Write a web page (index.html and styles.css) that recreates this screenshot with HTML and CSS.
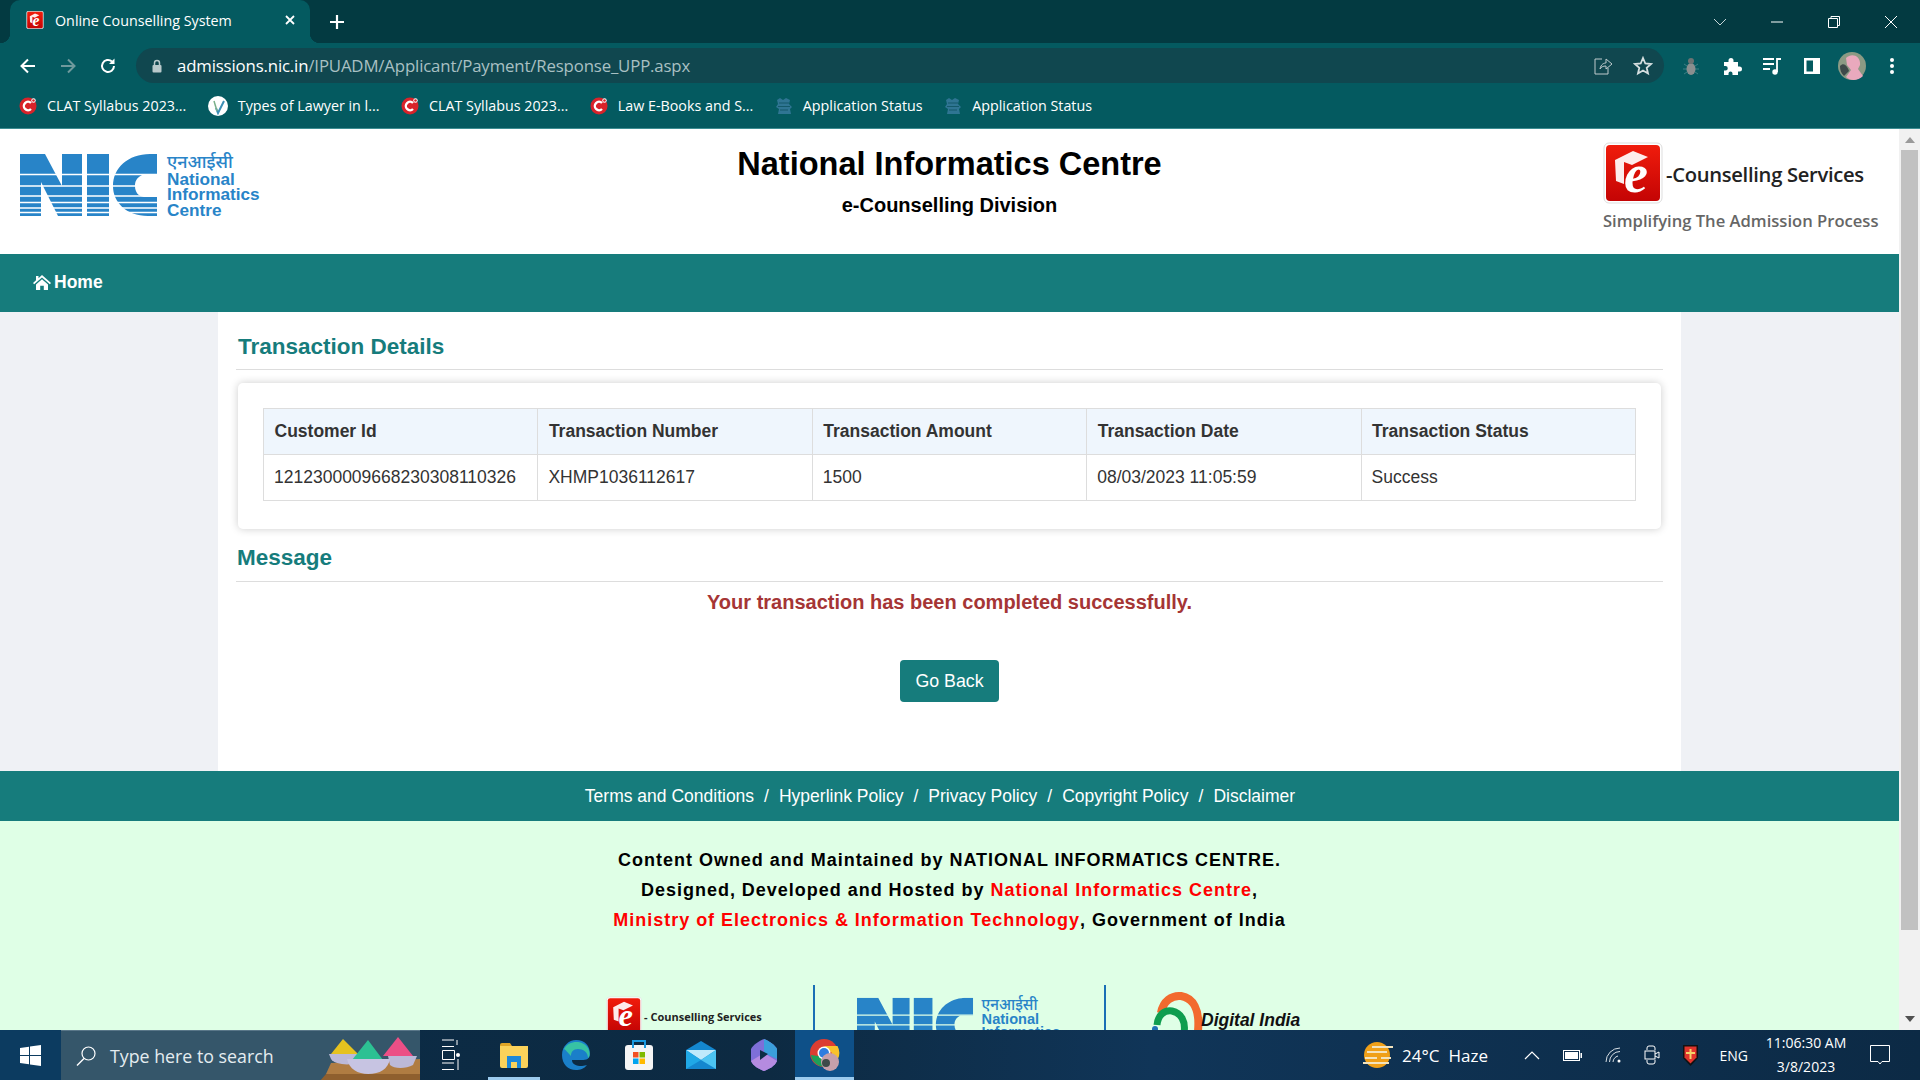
FILE: index.html
```html
<!DOCTYPE html>
<html lang="en">
<head>
<meta charset="utf-8">
<title>Online Counselling System</title>
<link rel="stylesheet" href="styles.css">
</head>
<body>
<svg class="defs" width="0" height="0">
  <defs>
    <linearGradient id="redg" x1="0" y1="0" x2="0" y2="1"><stop offset="0" stop-color="#f01c0c"/><stop offset="1" stop-color="#c40404"/></linearGradient>
    <symbol id="ec" viewBox="0 0 60 62">
      <rect x="1" y="1" width="58" height="60" rx="5" fill="#fff" stroke="#ddd"/>
      <rect x="3" y="3" width="54" height="56" rx="4" fill="url(#redg)"/>
      <path d="M12 18 L30 9 L45 15 L29 23 L21 20 V42 L13 39Z" fill="#fff" opacity=".92"/>
      <text x="33" y="50" class="ec-e">e</text>
    </symbol>
    <symbol id="clat" viewBox="0 0 18 18">
      <circle cx="9" cy="9" r="8.5" fill="#d8232a"/>
      <path d="M12 6 A4.2 4.2 0 1 0 12 12" fill="none" stroke="#fff" stroke-width="2.4"/>
      <circle cx="14.5" cy="3.5" r="2.2" fill="#fff"/><circle cx="14.5" cy="3.5" r="1.3" fill="#d8232a"/>
    </symbol>
    <symbol id="law" viewBox="0 0 20 20">
      <circle cx="10" cy="10" r="10" fill="#fff"/>
      <path d="M8 12 L10 17 L16 5" fill="none" stroke="#3d8fb5" stroke-width="2"/>
      <path d="M6 5 L9 15" stroke="#7ab08a" stroke-width="1.5"/>
    </symbol>
    <symbol id="emblem" viewBox="0 0 18 18">
      <path d="M2 3L5 1L8 3L11 1L15 3L14 7L17 10L15 12L16 17H3L4 12L1 10L3 7Z" fill="#2f7593"/>
      <path d="M4 6H14M3 9.500H15M5 13H13" stroke="#14596a" stroke-width="1"/>
    </symbol>
    <symbol id="nicmark" viewBox="0 0 137 62">
      <path d="M0 0H25L42 32V0H62V62H38L21 28V62H0Z" fill="#2884c8"/>
      <path d="M67 0H89V62H67Z" fill="#2884c8"/>
      <path d="M137 0V21H122C116 24 115 28 115 32C115 38 118 42 124 43H137V62H128C106 62 93 48 93 32C93 14 108 0 130 0Z" fill="#2884c8"/>
      <path d="M0 20.500H137M0 32H137M0 42H137M0 48.500H137M0 54H137M0 58.500H137" stroke="currentColor" stroke-width="1.5" fill="none"/>
    </symbol>
  </defs>
</svg>
<div class="screen">
  <div class="tabstrip">
    <div class="tab">
      <svg class="tab-fav" width="18" height="18"><use href="#ec"/></svg>
      <span class="tab-title">Online Counselling System</span>
      <svg class="tab-x" width="12" height="12" viewBox="0 0 12 12"><path d="M2 2L10 10M10 2L2 10" stroke="#fff" stroke-width="1.8"/></svg>
    </div>
    <svg class="tab-plus" width="16" height="16" viewBox="0 0 16 16"><path d="M8 1V15M1 8H15" stroke="#fff" stroke-width="2.2"/></svg>
    <div class="spacer"></div>
    <div class="winctl">
      <svg width="14" height="8" viewBox="0 0 14 8"><path d="M1 1L7 7L13 1" fill="none" stroke="#c6d6d8"/></svg>
      <svg width="14" height="2" viewBox="0 0 14 2"><path d="M1 1H13" stroke="#fff"/></svg>
      <svg width="14" height="14" viewBox="0 0 14 14"><path d="M1.500 3.500H10.500V12.500H1.500ZM4 3.500V1.500H12.500V10.500H10.500" fill="none" stroke="#fff"/></svg>
      <svg width="14" height="14" viewBox="0 0 14 14"><path d="M1 1L13 13M13 1L1 13" stroke="#fff"/></svg>
    </div>
  </div>
  <div class="toolbar">
    <svg class="nav-ic" width="18" height="18" viewBox="0 0 18 18"><path d="M16 9H3M9 2.500L2.500 9L9 15.500" fill="none" stroke="#fff" stroke-width="2"/></svg>
    <svg class="nav-ic" width="18" height="18" viewBox="0 0 18 18"><path d="M2 9H15M9 2.500L15.500 9L9 15.500" fill="none" stroke="#6f9a9d" stroke-width="2"/></svg>
    <svg class="nav-ic" width="18" height="18" viewBox="0 0 18 18"><path d="M15 9A6 6 0 1 1 13 4.500" fill="none" stroke="#fff" stroke-width="2"/><path d="M15.500 1.500V7H10Z" fill="#fff"/></svg>
    <div class="omnibox">
      <svg class="lock" width="12" height="14" viewBox="0 0 12 14"><path d="M3.500 6V4a2.500 2.500 0 0 1 5 0V6" fill="none" stroke="#b9c9cb" stroke-width="1.500"/><rect x="1.500" y="6" width="9" height="7.500" rx="1" fill="#b9c9cb"/></svg>
      <span class="url"><span class="url-host">admissions.nic.in</span>/IPUADM/Applicant/Payment/Response_UPP.aspx</span>
      <div class="spacer"></div>
      <svg class="omni-ic" width="20" height="20" viewBox="0 0 20 20"><path d="M9 3H2V18H15V12M7 13C8 8 11 7 13 7V3L19 8L13 13V10C10 10 8 11 7 13Z" fill="none" stroke="#bfcbcd" stroke-width="1"/></svg>
      <svg class="omni-ic star" width="20" height="20" viewBox="0 0 20 20"><path d="M10 2L12.300 7.500L18 8L13.700 11.800L15 17.500L10 14.500L5 17.500L6.300 11.800L2 8L7.700 7.500Z" fill="none" stroke="#d6dfe0" stroke-width="1.800"/></svg>
    </div>
    <div class="ext">
      <svg width="20" height="20" viewBox="0 0 20 20"><path d="M3 8L6 10M17 8L14 10M2 13H6M18 13H14M3 18L6 16M17 18L14 16" stroke="#3c7f84"/><ellipse cx="10" cy="13" rx="4.500" ry="6" fill="#8a8f8f"/><rect x="7" y="2" width="6" height="6" rx="3" fill="#6c7373"/></svg>
      <svg width="21" height="20" viewBox="0 0 21 20"><path d="M3 6H7.500V4.500a2.500 2.500 0 0 1 5 0V6H17V10.500H18.500a2.500 2.500 0 0 1 0 5H17V19H11.500V17.500a2 2 0 0 0-4 0V19H3V14.500H4.500a2.200 2.200 0 0 0 0-4.500H3Z" fill="#fff"/></svg>
      <svg width="20" height="20" viewBox="0 0 20 20"><path d="M1 3H12M1 8H12M1 13H8" stroke="#fff" stroke-width="1.800"/><path d="M15 16V3H19" fill="none" stroke="#fff" stroke-width="1.800"/><circle cx="13" cy="16" r="2.700" fill="#fff"/></svg>
      <svg width="20" height="20" viewBox="0 0 20 20"><path d="M2 2H18V18H2ZM4.500 4.500V15.500H11V4.500Z" fill="#fff" fill-rule="evenodd"/></svg>
      <svg class="avatar" width="28" height="28" viewBox="0 0 28 28"><circle cx="14" cy="14" r="14" fill="#8b9a84"/><path d="M8 6C14 0 23 4 22 13L20 17L25 24C20 29 12 29 8 25L13 18L9 13Z" fill="#e9a9bd"/><path d="M2 14C6 10 9 14 11 19L6 24C3 21 2 18 2 14Z" fill="#3e4a4a"/></svg>
      <svg width="20" height="20" viewBox="0 0 20 20"><circle cx="10" cy="4" r="2" fill="#fff"/><circle cx="10" cy="10" r="2" fill="#fff"/><circle cx="10" cy="16" r="2" fill="#fff"/></svg>
    </div>
  </div>
  <div class="bookmarks">
    <div class="bm"><svg width="18" height="18"><use href="#clat"/></svg><span>CLAT Syllabus 2023...</span></div>
    <div class="bm"><svg width="20" height="20"><use href="#law"/></svg><span>Types of Lawyer in l...</span></div>
    <div class="bm"><svg width="18" height="18"><use href="#clat"/></svg><span>CLAT Syllabus 2023...</span></div>
    <div class="bm"><svg width="18" height="18"><use href="#clat"/></svg><span>Law E-Books and S...</span></div>
    <div class="bm"><svg width="18" height="18"><use href="#emblem"/></svg><span>Application Status</span></div>
    <div class="bm"><svg width="18" height="18"><use href="#emblem"/></svg><span>Application Status</span></div>
  </div>

  <div class="viewport">
    <div class="page">
      <header class="site-head">
        <div class="head-left">
          <svg class="nic-logo" width="243" height="70" viewBox="0 0 243 70">
            <use href="#nicmark" x="0" y="4" width="137" height="62"/>
            <text x="147" y="18" class="nic-hi">एनआईसी</text>
            <text x="147" y="35" class="nic-en">National</text>
            <text x="147" y="50" class="nic-en">Informatics</text>
            <text x="147" y="66" class="nic-en">Centre</text>
          </svg>
        </div>
        <div class="head-mid">
          <h1>National Informatics Centre</h1>
          <p>e-Counselling Division</p>
        </div>
        <div class="head-right">
          <div class="ec-row">
            <svg width="60" height="62"><use href="#ec"/></svg>
            <span class="ec-name">-Counselling Services</span>
          </div>
          <div class="ec-tag">Simplifying The Admission Process</div>
        </div>
      </header>
      <nav class="site-nav">
        <svg width="18" height="15" viewBox="0 0 18 15"><path d="M9 0L18 8L16.800 9.200L9 2.400L1.200 9.200L0 8L3 5.300V1H5.500V3.200Z" fill="#fff"/><path d="M3 9.500L9 4.200L15 9.500V15H10.800V10.800H7.200V15H3Z" fill="#fff"/></svg>
        <span>Home</span>
      </nav>
      <main class="main">
        <section class="panel">
          <h2 class="sec-title">Transaction Details</h2>
          <div class="card">
            <table class="tx">
              <tr><th>Customer Id</th><th>Transaction Number</th><th>Transaction Amount</th><th>Transaction Date</th><th>Transaction Status</th></tr>
              <tr><td>1212300009668230308110326</td><td>XHMP1036112617</td><td>1500</td><td>08/03/2023 11:05:59</td><td>Success</td></tr>
            </table>
          </div>
          <h2 class="sec-title msg-title">Message</h2>
          <p class="success">Your transaction has been completed successfully.</p>
          <div class="btn-row"><a class="btn">Go Back</a></div>
        </section>
      </main>
      <div class="foot-links">
        <a>Terms and Conditions</a><i>/</i><a>Hyperlink Policy</a><i>/</i><a>Privacy Policy</a><i>/</i><a>Copyright Policy</a><i>/</i><a>Disclaimer</a>
      </div>
      <footer class="foot">
        <p>Content Owned and Maintained by NATIONAL INFORMATICS CENTRE.</p>
        <p>Designed, Developed and Hosted by <b>National Informatics Centre</b>,</p>
        <p><b>Ministry of Electronics &amp; Information Technology</b>, Government of India</p>
        <div class="foot-logos">
          <div class="fl fl-ec">
            <svg width="36" height="40"><use href="#ec"/></svg>
            <span>- Counselling Services</span>
          </div>
          <div class="fl fl-nic">
            <svg width="206" height="60" viewBox="0 0 243 70">
              <use href="#nicmark" x="0" y="4" width="137" height="62"/>
              <text x="147" y="18" class="nic-hi">एनआईसी</text>
              <text x="147" y="35" class="nic-en">National</text>
              <text x="147" y="50" class="nic-en">Informatics</text>
              <text x="147" y="66" class="nic-en">Centre</text>
            </svg>
          </div>
          <div class="fl fl-di">
            <svg width="152" height="50" viewBox="0 0 152 50">
              <path d="M12 22C14 10 23 4 32 5C44 7 51 18 49 40" fill="none" stroke="#f26a2e" stroke-width="8"/>
              <path d="M8 34C9 24 15 19 23 20C32 22 37 30 35 42" fill="none" stroke="#0f9d4f" stroke-width="7"/>
              <circle cx="6" cy="38" r="3" fill="#1f6fb5"/>
              <text x="52" y="35" class="di-text">Digital India</text>
            </svg>
          </div>
        </div>
      </footer>
    </div>
    <div class="scrollbar">
      <svg width="10" height="6" viewBox="0 0 10 6"><path d="M5 0L10 6H0Z" fill="#9a9a9a"/></svg>
      <div class="thumb"></div>
      <svg width="10" height="6" viewBox="0 0 10 6"><path d="M5 6L10 0H0Z" fill="#505050"/></svg>
    </div>
  </div>

  <div class="taskbar">
    <div class="start"><svg width="21" height="21" viewBox="0 0 21 21"><path d="M0 3L9 1.700V10H0ZM10 1.500L21 0V10H10ZM0 11H9V19.300L0 18ZM10 11H21V21L10 19.500Z" fill="#fff"/></svg></div>
    <div class="search">
      <svg width="22" height="22" viewBox="0 0 22 22"><circle cx="13.500" cy="8.500" r="6.500" fill="none" stroke="#fff" stroke-width="1.200"/><path d="M9 13.500L2 20.500" stroke="#fff" stroke-width="1.400"/></svg>
      <span>Type here to search</span>
      <div class="spacer"></div>
      <svg class="holi" width="100" height="50" viewBox="0 0 100 50">
        <path d="M11 32L100 28V43H6Z" fill="#b07c42"/>
        <path d="M6 43H100V50H0Z" fill="#8f5f2e"/>
        <path d="M11 23L23 8L38 23Z" fill="#e6c21f"/>
        <path d="M63 25L78 6L93 25Z" fill="#ec4f86"/>
        <path d="M9 23H40L36 32C28 35 14 33 11 28Z" fill="#bcb9d8"/>
        <path d="M68 25H97L93 34C86 38 74 38 70 34Z" fill="#bcb9d8"/>
        <path d="M32 29L48 9L63 29Z" fill="#2cc193"/>
        <path d="M27 28H70C68 38 60 43 48 43C38 43 29 38 27 28Z" fill="#c7c4e2"/>
      </svg>
    </div>
    <div class="tb-apps">
      <div class="app"><svg width="20" height="32" viewBox="0 0 20 32"><path d="M1 1H13M1 7.500H13M1 24H13M1 30.500H13M16 1V6" stroke="#fff" fill="none"/><path d="M1.500 11.500H13.500V20.500H1.500Z" fill="none" stroke="#fff"/><circle cx="17" cy="16" r="2" fill="#fff"/><path d="M17 20V31" stroke="#fff"/></svg></div>
      <div class="app running"><svg width="28" height="26" viewBox="0 0 28 26"><path d="M0 3A2 2 0 0 1 2 1H10L12 4H0Z" fill="#e0a526"/><path d="M0 4H28V24A2 2 0 0 1 26 26H2A2 2 0 0 1 0 24Z" fill="#fbd25a"/><path d="M7 14H21V26H17V20H11V26H7Z" fill="#1e88d8"/></svg></div>
      <div class="app"><svg width="30" height="30" viewBox="0 0 30 30"><path d="M1 15C1 6 8 0 15 0C24 0 29 6 29 14C29 19 25 20 21 20H11C11 24 15 26 21 26C23 26 25 25 26 25C23 29 19 30 15 30C7 30 1 24 1 15Z" fill="#1a7fc9"/><path d="M3 9C7 1 21 -1 27 8C29 12 29 16 27 18C27 12 22 9 17 9C12 9 10 12 10 16C6 12 5 10 3 9Z" fill="#37c2a4"/></svg></div>
      <div class="app"><svg width="28" height="30" viewBox="0 0 28 30"><rect y="5" width="28" height="25" rx="3" fill="#f5f5f5"/><path d="M8 8V1H20V8" fill="none" stroke="#1b9ae0" stroke-width="2"/><rect x="8" y="12" width="5.500" height="5.500" fill="#f25022"/><rect x="14.500" y="12" width="5.500" height="5.500" fill="#7fba00"/><rect x="8" y="18.500" width="5.500" height="5.500" fill="#00a4ef"/><rect x="14.500" y="18.500" width="5.500" height="5.500" fill="#ffb900"/></svg></div>
      <div class="app"><svg width="30" height="28" viewBox="0 0 30 28"><path d="M0 9L15 0L30 9V28H0Z" fill="#1487cf"/><path d="M0 9H30L15 19Z" fill="#bfe9fb"/><path d="M0 28V9L15 19Z" fill="#20a8e6"/><path d="M30 28V9L15 19Z" fill="#4cc4f2"/></svg></div>
      <div class="app"><svg width="26" height="32" viewBox="0 0 26 32"><path d="M13 0C18 2 24 6 26 10V22C24 27 18 30 13 32C8 30 2 27 0 22V10C2 6 8 2 13 0Z" fill="#7e6fd8"/><path d="M13 0C18 2 24 6 26 10V20L13 14Z" fill="#3b9fdc"/><path d="M0 22L13 14L26 22C24 27 18 30 13 32C8 30 2 27 0 22Z" fill="#b58be0"/><path d="M9 11L17 15L9 21Z" fill="#0d2d45"/></svg></div>
      <div class="app active"><svg width="30" height="32" viewBox="0 0 30 32"><circle cx="14" cy="14" r="14" fill="#dc3d32"/><path d="M1 16A14 14 0 0 0 16 28L22 17H8Z" fill="#1da05a"/><path d="M14 7H27.500A14 14 0 0 1 16 28L22 14Z" fill="#f9c22c"/><circle cx="14" cy="14" r="6.500" fill="#fff"/><circle cx="14" cy="14" r="5" fill="#2f7de0"/><circle cx="20" cy="23" r="9" fill="#c7a0ab"/><circle cx="16" cy="24" r="4" fill="#3e4a4a"/></svg></div>
    </div>
    <div class="spacer"></div>
    <div class="weather">
      <svg width="30" height="30" viewBox="0 0 30 30"><circle cx="14" cy="15" r="13" fill="#f0a018"/><path d="M9 7H30M4 12H24M2 18H14M18 18H28M0 23H26" stroke="#f3e3bd" stroke-width="2"/></svg>
      <span class="temp">24°C</span><span>Haze</span>
    </div>
    <div class="tray">
      <svg width="16" height="9" viewBox="0 0 16 9"><path d="M1 8L8 1L15 8" fill="none" stroke="#fff" stroke-width="1.200"/></svg>
      <svg width="19" height="11" viewBox="0 0 19 11"><rect x=".5" y=".5" width="16" height="10" fill="none" stroke="#fff"/><rect x="2" y="2" width="13" height="7" fill="#fff"/><rect x="17.500" y="3" width="1.500" height="5" fill="#fff"/></svg>
      <svg width="16" height="16" viewBox="0 0 16 16"><path d="M1 15A14 14 0 0 1 15 1M4.500 15A10.500 10.500 0 0 1 15 4.500M8 15A7 7 0 0 1 13 9" fill="none" stroke="#d8e0e6"/><circle cx="14" cy="14" r="1.500" fill="#fff"/></svg>
      <svg width="16" height="20" viewBox="0 0 16 20"><path d="M3 5V3A2 2 0 0 1 5 1H9A2 2 0 0 1 11 3V5M3 15V17A2 2 0 0 0 5 19H9A2 2 0 0 0 11 17V15" fill="none" stroke="#fff"/><rect x="1" y="6" width="10" height="8" fill="none" stroke="#fff"/><path d="M11 9L15 7V13L11 11" fill="none" stroke="#fff"/></svg>
      <svg width="15" height="21" viewBox="0 0 15 21"><path d="M0 0H15V13L7.500 21L0 13Z" fill="#111"/><path d="M1.500 1.500H13.500V12.500L7.500 18.500L1.500 12.500Z" fill="#e0342c"/><path d="M7.500 4V14M3 8H12" stroke="#f3d26a" stroke-width="2"/></svg>
    </div>
    <span class="lang">ENG</span>
    <div class="clock"><span>11:06:30 AM</span><span>3/8/2023</span></div>
    <div class="notif"><svg width="20" height="20" viewBox="0 0 20 20"><path d="M.5.5H19.500V16.500H12L10 19L8 16.500H.5Z" fill="none" stroke="#fff"/></svg></div>
  </div>
</div>
</body>
</html>
```

FILE: styles.css
```css
* { box-sizing: border-box; }
html, body { margin: 0; height: 100%; overflow: hidden; }
body { font-family: "Liberation Sans", Arial, sans-serif; }
.defs { position: absolute; }
.spacer { flex: 1; }
svg { display: block; flex: none; }
.screen { display: flex; flex-direction: column; height: 1080px; overflow: hidden; }

/* browser chrome */
.tabstrip { height: 43px; background: #033a41; display: flex; align-items: flex-end; flex: none; }
.tab { position: relative; width: 300px; height: 43px; margin-left: 10px; background: #045a60; border-radius: 10px 10px 0 0; display: flex; align-items: center; padding-left: 16px; color: #fff; font: 14.300px "Open Sans", sans-serif; }
.tab::before, .tab::after { content: ""; position: absolute; bottom: 0; width: 10px; height: 10px; }
.tab::before { left: -10px; background: radial-gradient(circle at 0 0, transparent 10px, #045a60 10.500px); }
.tab::after { right: -10px; background: radial-gradient(circle at 100% 0, transparent 10px, #045a60 10.500px); }
.tab-fav { margin-top: -3px; }
.tab-title { margin-left: 11px; width: 233px; margin-top: -3px; white-space: nowrap; }
.tab-x { margin-left: -4px; margin-top: -3px; }
.tab-plus { margin: 0 0 13px 19px; }
.winctl { display: flex; align-items: center; height: 43px; margin-top: -6px; padding-right: 22px; gap: 43px; }
.toolbar { height: 42px; padding-top: 3px; background: #045a60; display: flex; align-items: center; padding-left: 19px; flex: none; }
.nav-ic { margin-right: 22px; }
.nav-ic:nth-child(3) { margin-right: 19px; }
.omnibox { width: 1528px; height: 35px; background: #10474f; border-radius: 18px; display: flex; align-items: center; padding: 0 11px 0 15px; }
.url { margin-left: 14px; font: 16.800px "Open Sans", sans-serif; letter-spacing: -.15px; color: #a9c0c3; white-space: nowrap; }
.url-host { color: #fff; }
.star { margin-left: 20px; }
.ext { display: flex; align-items: center; margin-left: 17px; gap: 20px; }
.ext .avatar { margin: 0 -4px; }
.bookmarks { height: 44px; background: #045a60; border-bottom: 1px solid #3d8d92; padding-bottom: 2px; display: flex; align-items: center; padding-left: 19px; flex: none; color: #fff; font: 14.300px "Open Sans", sans-serif; }
.bm { display: flex; align-items: center; gap: 10px; white-space: nowrap; margin-right: 21.500px; }

/* page */
.viewport { flex: 1; display: flex; min-height: 0; }
.page { flex: 1; min-width: 0; background: #fff; overflow: hidden; }
.scrollbar { width: 21px; background: #f1f1f1; display: flex; flex-direction: column; align-items: center; padding: 8px 0; flex: none; }
.thumb { width: 17px; height: 780px; background: #c1c1c1; margin: 7px 0 auto; }
.site-head { height: 125px; display: grid; grid-template-columns: 1fr auto 1fr; align-items: start; background: #fff; }
.head-left { padding: 21px 0 0 20px; }
.nic-hi { font: 500 18px "Noto Sans", "Noto Sans Devanagari", "Liberation Sans", sans-serif; fill: #2884c8; }
.nic-en { font: 700 17.200px "Liberation Sans", sans-serif; fill: #2884c8; }
.nic-logo { color: #fff; }
.fl-nic svg { color: #dfffe6; }
.head-mid { text-align: center; padding-top: 15px; }
.head-mid h1 { margin: 0; font-size: 32.500px; line-height: 40px; font-weight: 700; color: #000; }
.head-mid p { margin: 6px 0 0; font-size: 20px; line-height: 30px; font-weight: 700; color: #000; }
.head-right { justify-self: end; width: 296px; padding: 13px 0 0 0; }
.ec-row { display: flex; align-items: center; }
.ec-name { font: 600 20.200px "Open Sans", sans-serif; color: #222; margin: 2px 0 0 3px; letter-spacing: -.3px; white-space: nowrap; }
.ec-tag { font: 600 16.600px "Open Sans", sans-serif; color: #666; margin-top: 5px; white-space: nowrap; }
.site-nav { height: 58px; padding-bottom: 2px; background: #167c7c; display: flex; align-items: center; padding-left: 33px; gap: 3px; color: #fff; font-size: 17.500px; font-weight: 700; }
.main { height: 459px; background: #eff1f5; display: flex; justify-content: center; }
.panel { width: 1463px; background: #fff; padding: 0 18px; }
.sec-title { margin: 0; padding: 17px 0 4px 2px; font-size: 22.500px; line-height: 36px; font-weight: 700; color: #167c7c; border-bottom: 1px solid #ddd; }
.msg-title { padding: 1px 0 5px 1px; margin-top: 10px; }
.card { margin: 13px 2px 0; height: 146px; padding: 25px 25px 0 25px; background: #fff; border-radius: 5px; box-shadow: 0 0 8px rgba(0,0,0,.2); }
.tx { width: 100%; border-collapse: collapse; table-layout: fixed; font-size: 17.500px; color: #333; }
.tx th, .tx td { border: 1px solid #ddd; padding: 0 10px; text-align: left; height: 46px; }
.tx th { background: #eff6fd; font-weight: 700; padding-left: 10.500px; }
.success { margin: 5px 0 0; text-align: center; font-size: 20px; line-height: 30px; font-weight: 700; color: #a53535; }
.btn-row { margin-top: 43px; display: flex; justify-content: center; }
.btn { width: 99px; height: 42px; display: flex; align-items: center; justify-content: center; background: #167c7c; color: #fff; border-radius: 4px; font-size: 17.800px; }
.foot-links { height: 50px; background: #167c7c; color: #fff; display: flex; align-items: center; justify-content: center; padding-right: 19px; font-size: 17.500px; }
.foot-links i { font-style: normal; margin: 0 10px; }
.foot { height: 209px; background: #dfffe6; overflow: hidden; padding-top: 24px; text-align: center; color: #000; font-size: 18px; font-weight: 700; letter-spacing: .98px; }
.foot p { margin: 0; line-height: 30px; }
.foot b { color: #f00; }
.foot-logos { display: flex; margin-top: 50px; padding-left: 524px; letter-spacing: 0; text-align: left; }
.fl { width: 291px; height: 60px; flex: none; }
.fl-ec { display: flex; align-items: flex-start; padding: 10px 0 0 82px; border-right: 2px solid #1a6fb5; }
.fl-ec span { font: 700 11px "Open Sans", sans-serif; color: #222; margin: 14px 0 0 2px; white-space: nowrap; }
.fl-nic { padding: 9px 0 0 42px; border-right: 2px solid #1a6fb5; }
.fl-di { padding: 6px 0 0 43px; }
.di-text { font: italic 700 17.500px "Liberation Sans", sans-serif; fill: #111; }
.ec-e { font: italic 700 54px "Liberation Serif", serif; fill: #fff; text-anchor: middle; }

/* taskbar */
.taskbar { height: 50px; flex: none; display: flex; align-items: center; color: #fff; background: linear-gradient(90deg, #0a2c47, #0d2a42 40%, #103558 60%, #0c2a45); font: 14px "Open Sans", sans-serif; }
.start { width: 61px; height: 50px; display: flex; align-items: center; justify-content: center; background: #0c3b60; }
.search { width: 359px; height: 50px; background: #35566a; border-top: 1px solid #5a7789; display: flex; align-items: center; padding-left: 14px; font-size: 17.800px; color: #e4ecf0; overflow: hidden; }
.search span { margin-left: 13px; }
.tb-apps { display: flex; align-items: center; height: 50px; }
.app { width: 62.700px; height: 50px; display: flex; align-items: center; justify-content: center; }
.app.running { box-shadow: inset 0 -3px 0 #9ccbee; width: 52px; margin: 0 5px; }
.app.active { background: #0e5088; box-shadow: inset 0 -3px 0 #9ccbee; width: 59px; }
.weather { display: flex; align-items: center; font-size: 17px; gap: 9px; }
.tray { display: flex; align-items: center; gap: 23px; margin-left: 35.500px; }
.lang { margin-left: 22px; font-size: 14px; }
.clock { display: flex; flex-direction: column; align-items: center; margin-left: 18px; width: 80px; font-size: 14px; line-height: 24px; white-space: nowrap; }
.notif { margin: 0 30px 0 24px; }
```
